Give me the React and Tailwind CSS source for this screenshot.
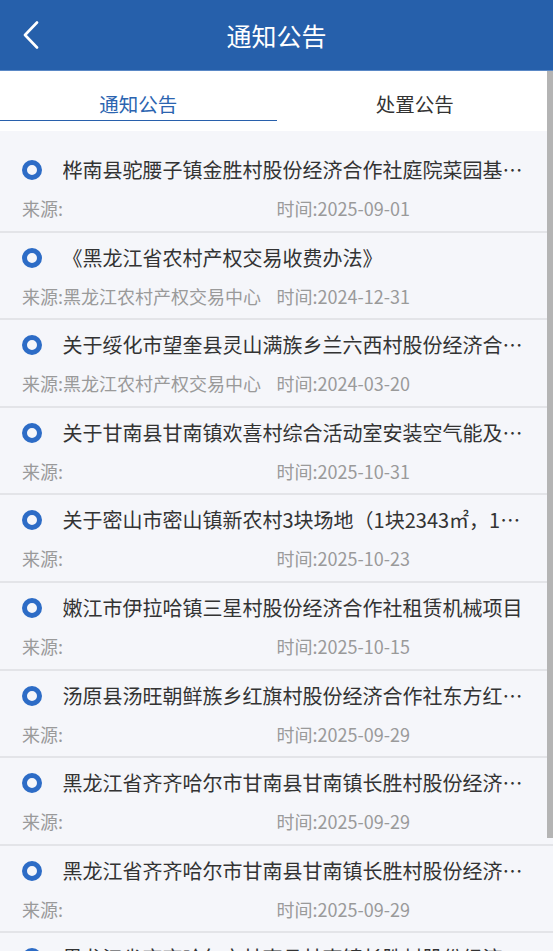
import { useState } from "react";

const notices = [
  {
    title: "桦南县驼腰子镇金胜村股份经济合作社庭院菜园基地出租项目",
    source: "",
    time: "2025-09-01",
  },
  {
    title: "《黑龙江省农村产权交易收费办法》",
    source: "黑龙江农村产权交易中心",
    time: "2024-12-31",
  },
  {
    title: "关于绥化市望奎县灵山满族乡兰六西村股份经济合作社资产处置的公告",
    source: "黑龙江农村产权交易中心",
    time: "2024-03-20",
  },
  {
    title: "关于甘南县甘南镇欢喜村综合活动室安装空气能及配套设施项目",
    source: "",
    time: "2025-10-31",
  },
  {
    title: "关于密山市密山镇新农村3块场地（1块2343㎡，1块1200㎡）租赁项目",
    source: "",
    time: "2025-10-23",
  },
  {
    title: "嫩江市伊拉哈镇三星村股份经济合作社租赁机械项目",
    source: "",
    time: "2025-10-15",
  },
  {
    title: "汤原县汤旺朝鲜族乡红旗村股份经济合作社东方红水库承包项目",
    source: "",
    time: "2025-09-29",
  },
  {
    title: "黑龙江省齐齐哈尔市甘南县甘南镇长胜村股份经济合作社土地发包项目",
    source: "",
    time: "2025-09-29",
  },
  {
    title: "黑龙江省齐齐哈尔市甘南县甘南镇长胜村股份经济合作社机动地发包项目",
    source: "",
    time: "2025-09-29",
  },
  {
    title: "黑龙江省齐齐哈尔市甘南县甘南镇长胜村股份经济合作社资产租赁项目",
    source: "",
    time: "2025-09-28",
  },
];

const NoticeItem = ({ item }) => {
  return (
    <div className="h-[87.6px] border-b-2 border-[#e3e4e8] pt-[10px]">
      <div className="flex items-center h-[30px] pl-[21.5px]">
        <span className="w-[20px] h-[20px] shrink-0 rounded-full border-[5px] border-[#2d6cc6]" />
        <p className="ml-[21px] w-[461px] truncate text-[20px] leading-[30px] text-[#333333]">
          {item.title}
        </p>
      </div>
      <div className="grid grid-cols-2 px-[22px] mt-[11px] text-[18px] leading-[24px] text-[#9a9a9a]">
        <span className="truncate">来源:{item.source}</span>
        <span>时间:{item.time}</span>
      </div>
    </div>
  );
};

export default function App() {
  const [tab, setTab] = useState(0);

  return (
    <div className="relative h-[951px] overflow-hidden bg-[#f5f6fa] font-[family-name:'Noto_Sans_CJK_SC','Noto_Sans',sans-serif]">
      {/* header */}
      <div className="grid grid-cols-[70px_1fr_70px] items-center h-[71px] bg-[#2660ab] border-b border-[#5a88c6]">
        <button className="flex items-center pl-[22px] h-full">
          <svg width="18" height="28" viewBox="0 0 18 28" fill="none">
            <path
              d="M15 1.5 L3 14 L15 26.5"
              stroke="#ffffff"
              strokeWidth="2.6"
              strokeLinecap="round"
              strokeLinejoin="round"
            />
          </svg>
        </button>
        <h1 className="text-center text-[25px] leading-[34px] text-white">通知公告</h1>
        <div />
      </div>

      {/* tabs */}
      <div className="flex h-[60px] bg-white">
        {["通知公告", "处置公告"].map((name, i) => (
          <button
            key={name}
            onClick={() => setTab(i)}
            className="flex-1 flex flex-col items-stretch pt-[20px]"
          >
            <span
              className={
                "block text-center text-[19.5px] leading-[26px] " +
                (tab === i ? "text-[#2b64b0]" : "text-[#333333]")
              }
            >
              {name}
            </span>
            <span
              className={
                "block mt-[3px] h-px " + (tab === i ? "bg-[#2860ac]" : "bg-transparent")
              }
            />
          </button>
        ))}
      </div>

      {/* list */}
      <div className="pt-[14px]">
        {notices.map((item, i) => (
          <NoticeItem key={i} item={item} />
        ))}
      </div>

      {/* scrollbar thumb */}
      <div className="absolute right-0 top-[71px] w-[6px] h-[767px] bg-[#b4b4b4]" />
    </div>
  );
}
